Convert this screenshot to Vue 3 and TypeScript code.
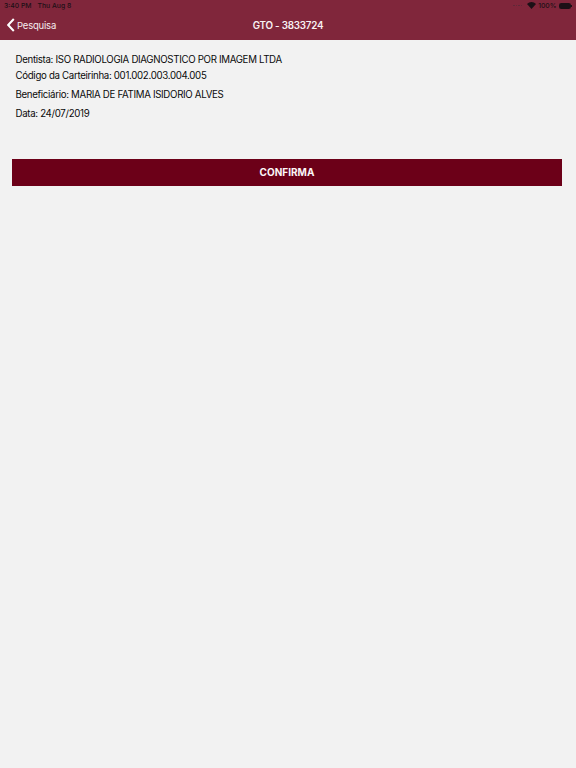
<script setup lang="ts">
const lines: { text: string; cls: string }[] = [
  { text: 'Dentista: ISO RADIOLOGIA DIAGNOSTICO POR IMAGEM LTDA', cls: 'l1' },
  { text: 'Código da Carteirinha: 001.002.003.004.005', cls: 'l2' },
  { text: 'Beneficiário: MARIA DE FATIMA ISIDORIO ALVES', cls: 'l3' },
  { text: 'Data: 24/07/2019', cls: 'l4' },
]
const signal: number[] = [1, 2, 3, 4]
</script>

<template>
  <div class="page">
    <header class="nav">
      <div class="status">
        <div class="status-left"><span>3:40 PM</span><span>Thu Aug 8</span></div>
        <div class="status-right">
          <span class="signal"><i v-for="s in signal" :key="s"></i></span>
          <svg width="9" height="7" viewBox="0 0 18 14" class="wifi">
            <path d="M9 14 0 4.2C5-1.2 13-1.2 18 4.2Z" fill="#1c1016" />
          </svg>
          <span>100%</span>
          <span class="battery"><span class="battery-fill"></span></span>
          <span class="nub"></span>
        </div>
      </div>
      <div class="bar">
        <div class="back">
          <svg width="8" height="14" viewBox="0 0 8 14">
            <path d="M6.8 1 1.2 7l5.6 6" fill="none" stroke="#fff" stroke-width="2" />
          </svg>
          <span>Pesquisa</span>
        </div>
        <div class="title">GTO - 3833724</div>
      </div>
    </header>
    <main class="content">
      <p v-for="l in lines" :key="l.cls" :class="['line', l.cls]">{{ l.text }}</p>
      <button class="confirm" type="button">CONFIRMA</button>
    </main>
  </div>
</template>

<style>
html, body { margin: 0; background: #f2f2f2; }
</style>

<style scoped>
.page {
  width: 576px;
  height: 768px;
  background: #f2f2f2;
  font-family: Inter, "Liberation Sans", sans-serif;
  overflow: hidden;
}
.nav { height: 40px; background: #80263b; }
.status {
  height: 11px;
  display: flex;
  justify-content: space-between;
  align-items: center;
  padding: 0 4px 0 4px;
  font-size: 6.8px;
  font-weight: 500;
  color: #1c1016;
}
.status-left { display: flex; gap: 6px; }
.status-right { display: flex; align-items: center; gap: 2.5px; }
.signal { display: flex; gap: 1px; margin-right: 2px; }
.signal i { width: 1.5px; height: 1.5px; border-radius: 50%; background: #5a2a38; }
.battery {
  width: 12px;
  height: 6px;
  border: 0.5px solid #1c1016;
  border-radius: 1.5px;
  box-sizing: border-box;
  display: flex;
}
.battery-fill { flex: 1; background: #1c1016; }
.nub { width: 1px; height: 2px; margin-left: -2.5px; background: #1c1016; }
.bar {
  position: relative;
  height: 29px;
  display: flex;
  align-items: center;
  justify-content: center;
}
.back {
  position: absolute;
  left: 7px;
  top: 7px;
  display: flex;
  align-items: center;
  gap: 2px;
  color: #f6ecef;
  font-size: 9.5px;
  letter-spacing: -0.2px;
}
.title { color: #f8f1f3; font-size: 9.8px; font-weight: 600; letter-spacing: -0.2px; }
.content { padding: 12px 14px 0 15.5px; }
.line {
  margin: 0;
  font-size: 9.7px;
  letter-spacing: -0.32px;
  line-height: 15px;
  color: #0a0a0a;
}
.l2 { margin-top: 1px; }
.l3 { margin-top: 4px; }
.l4 { margin-top: 4px; }
.confirm {
  display: block;
  width: 550px;
  height: 27px;
  margin: 38px 0 0 -3.5px;
  border: 0;
  padding: 0 0 2px;
  background: #6c0018;
  color: #fbf6f7;
  font-family: inherit;
  font-size: 10px;
  font-weight: 700;
}
</style>
